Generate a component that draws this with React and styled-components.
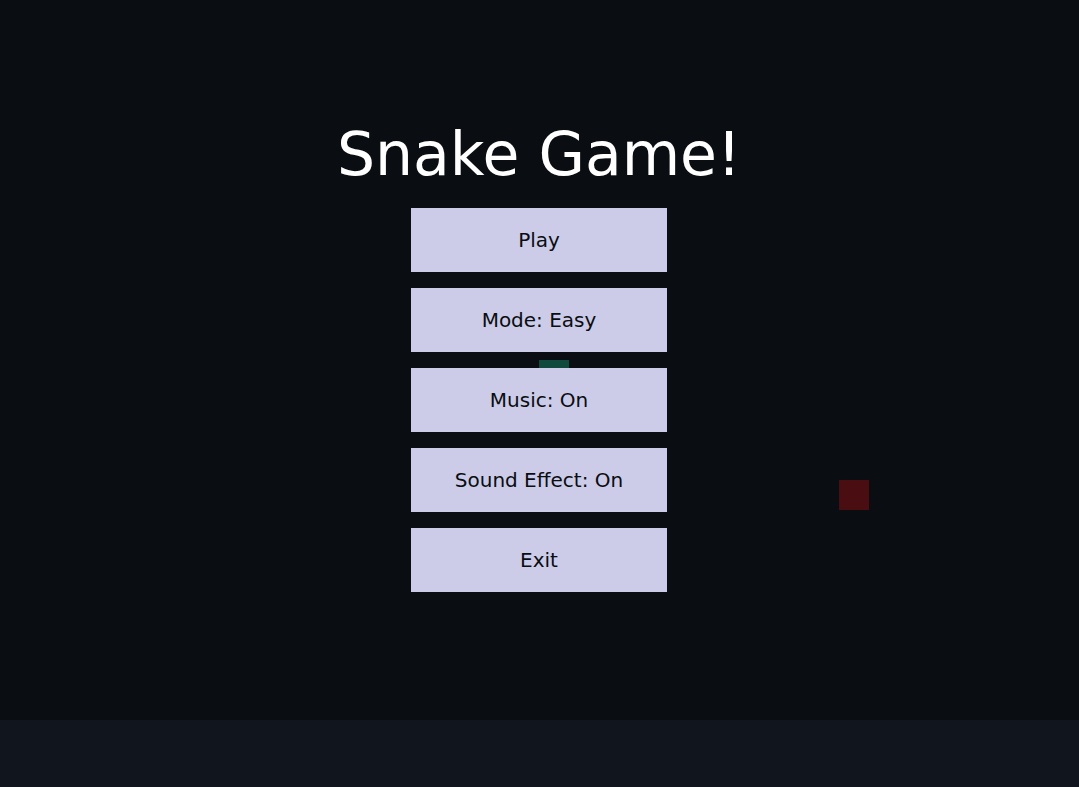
import React from "react";
import styled, { createGlobalStyle } from "styled-components";

const Global = createGlobalStyle`
  html, body { margin: 0; padding: 0; background: #11151e; }
  body { font-family: "DejaVu Sans", "Liberation Sans", sans-serif; }
`;

const Page = styled.div`
  width: 1079px;
  height: 787px;
  display: flex;
  flex-direction: column;
  background: #11151e;
`;

const Canvas = styled.div`
  position: relative;
  height: 720px;
  background: #0a0d11;
  overflow: hidden;
`;

const Cell = styled.div`
  position: absolute;
  width: 30px;
  height: 30px;
  background: ${(p) => p.$color};
`;

const Menu = styled.div`
  position: absolute;
  inset: 0;
  display: flex;
  flex-direction: column;
  align-items: center;
  padding: 118px 1px 0 0;
`;

const Title = styled.h1`
  margin: 1px 0 19px;
  font-family: "DejaVu Sans", sans-serif;
  font-weight: normal;
  font-size: 60px;
  line-height: 70px;
  color: #ffffff;
`;

const Buttons = styled.div`
  display: flex;
  flex-direction: column;
  gap: 16px;
`;

const Button = styled.button`
  width: 256px;
  height: 64px;
  border: none;
  margin: 0;
  padding: 0;
  background: #cccce8;
  color: #0a0d11;
  font-family: "DejaVu Sans", sans-serif;
  font-size: 20px;
  display: flex;
  align-items: center;
  justify-content: center;
  cursor: pointer;
`;

const items = ["Play", "Mode: Easy", "Music: On", "Sound Effect: On", "Exit"];

export default function App() {
  return (
    <>
      <Global />
      <Page>
        <Canvas>
          <Cell $color="#0f4a3c" style={{ left: 539, top: 360 }} />
          <Cell $color="#4a0d12" style={{ left: 839, top: 480 }} />
          <Menu>
            <Title>Snake Game!</Title>
            <Buttons>
              {items.map((t) => (
                <Button key={t}>{t}</Button>
              ))}
            </Buttons>
          </Menu>
        </Canvas>
      </Page>
    </>
  );
}
